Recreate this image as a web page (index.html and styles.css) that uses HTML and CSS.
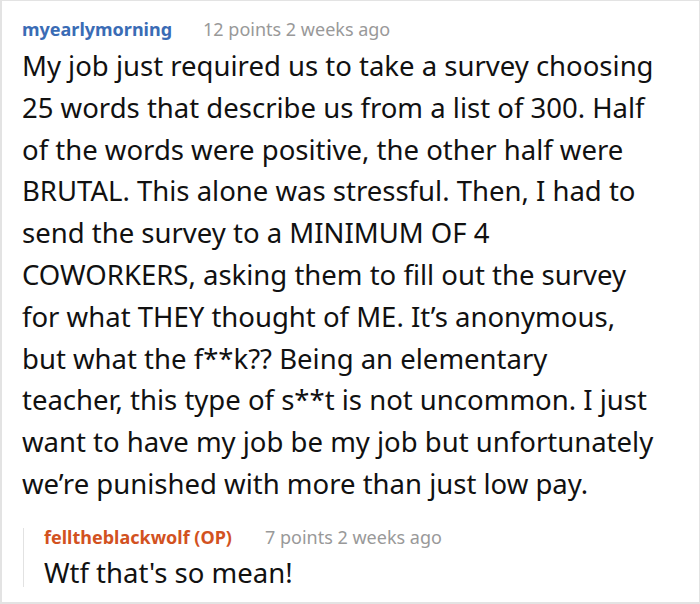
FILE: index.html
```html
<!DOCTYPE html>
<html>
<head>
<meta charset="utf-8">
<link rel="stylesheet" href="styles.css">
</head>
<body>
<div class="frame">
  <div class="comment">
    <div class="meta"><span class="user">myearlymorning</span><span class="info">12 points 2 weeks ago</span></div>
    <p class="text">My job just required us to take a survey choosing<br>25 words that describe us from a list of 300. Half<br>of the words were positive, the other half were<br>BRUTAL. This alone was stressful. Then, I had to<br>send the survey to a MINIMUM OF 4<br>COWORKERS, asking them to fill out the survey<br>for what THEY thought of ME. It’s anonymous,<br>but what the f**k?? Being an elementary<br>teacher, this type of s**t is not uncommon. I just<br>want to have my job be my job but unfortunately<br>we’re punished with more than just low pay.</p>
    <div class="reply">
      <div class="meta"><span class="user op">felltheblackwolf (OP)</span><span class="info">7 points 2 weeks ago</span></div>
      <p class="text">Wtf that's so mean!</p>
    </div>
  </div>
</div>
</body>
</html>
```

FILE: styles.css
```css
html, body {
  margin: 0;
  padding: 0;
  background: #fff;
}
.frame {
  box-sizing: border-box;
  width: 700px;
  height: 604px;
  border-style: solid;
  border-color: #e3e3e3;
  border-width: 1px 1px 2px 2px;
  font-family: "Noto Sans", sans-serif;
  color: #111;
  overflow: hidden;
}
.comment {
  padding: 16px 0 0 20px;
}
.meta {
  display: flex;
  align-items: baseline;
  gap: 31px;
  font-size: 18px;
  line-height: 24px;
}
.user {
  font-weight: 700;
  color: #3a6cb5;
}
.user.op {
  color: #d2521f;
}
.info {
  color: #999;
}
.text {
  margin: 4px 0 0;
  font-size: 27.5px;
  line-height: 41.8px;
  white-space: nowrap;
}
.reply {
  margin-top: 30px;
  margin-left: 1px;
  border-left: 1px solid #e2e2e2;
  padding-left: 20px;
}
.reply .meta {
  margin-top: -7px;
  line-height: 18px;
  gap: 33px;
}
.reply .text {
  margin-top: 12px;
  line-height: 29px;
}
```
